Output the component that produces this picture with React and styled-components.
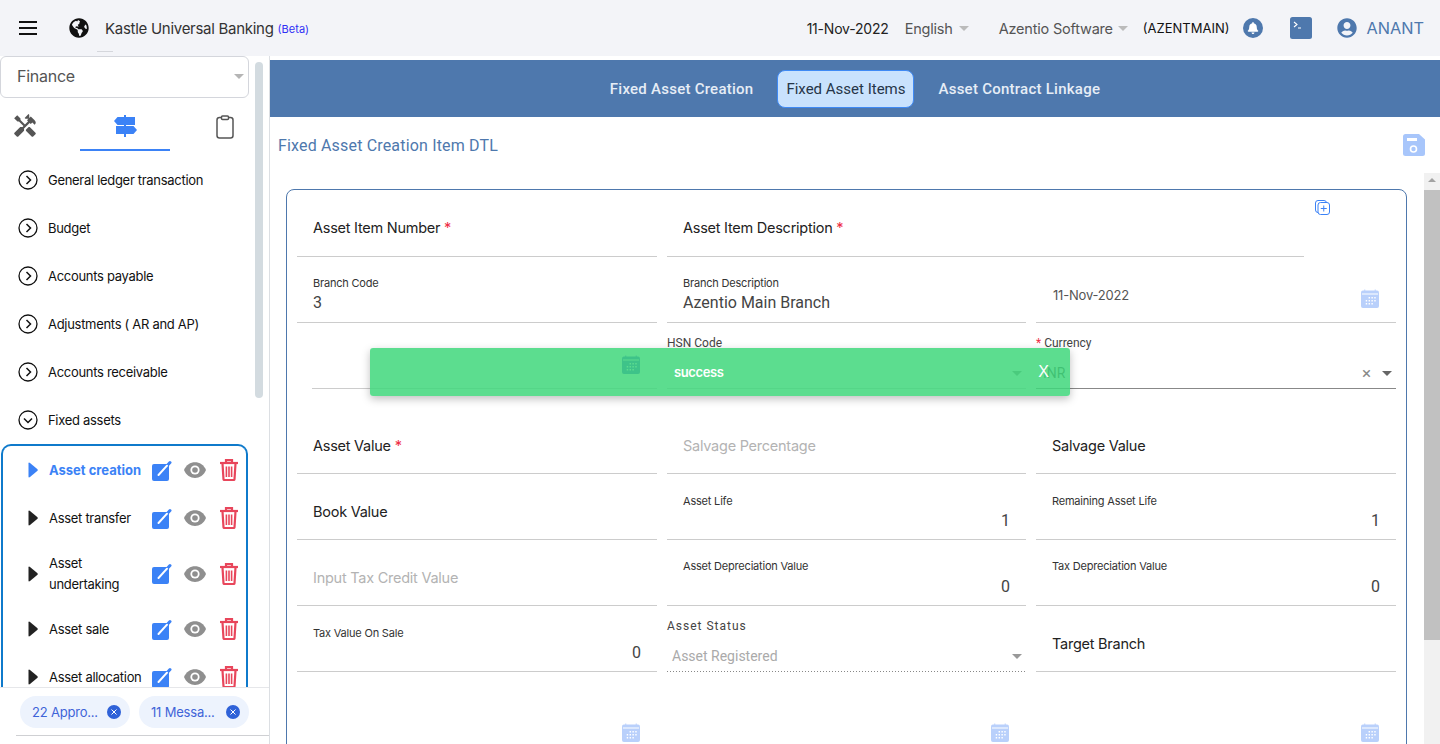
import React from "react";
import styled, { createGlobalStyle } from "styled-components";
import { FaGlobeAmericas, FaBell, FaUserCircle } from "react-icons/fa";
import { MdHandyman } from "react-icons/md";

const GlobalStyle = createGlobalStyle`
  html, body { margin: 0; height: 100%; overflow: hidden; background: #fff; }
  body { font-family: Inter, "Liberation Sans", sans-serif; color: #222; }
  * { box-sizing: border-box; }
`;

const Page = styled.div`
  position: relative;
  width: 1440px;
  height: 744px;
  overflow: hidden;
  display: flex;
  flex-direction: column;
`;

/* header */
const Header = styled.header`
  position: relative;
  height: 56px;
  flex: none;
  display: flex;
  align-items: center;
  background: #f3f4f8;
  padding: 0 16px 0 19px;
`;
const Burger = styled.div`
  width: 18px;
  height: 14px;
  border-top: 2px solid #111;
  border-bottom: 2px solid #111;
  position: relative;
  margin-right: 32px;
  &::after {
    content: "";
    position: absolute;
    left: 0;
    right: 0;
    top: 4px;
    height: 2px;
    background: #111;
  }
`;
const Globe = styled(FaGlobeAmericas)`
  width: 20px;
  height: 20px;
  color: #111;
  margin-right: 16px;
`;
const Brand = styled.span`
  font-size: 15px;
  color: #333;
  letter-spacing: -0.28px;
`;
const Beta = styled.span`
  font-size: 11px;
  color: #3030f5;
  margin-left: 4px;
  position: relative;
  top: 1px;
`;
const Notch = styled.i`
  position: absolute;
  left: 97px;
  top: 51px;
  width: 16px;
  height: 1px;
  background: #d5d7dc;
`;
const HeaderRight = styled.div`
  margin-left: auto;
  display: flex;
  align-items: center;
`;
const HeadText = styled.span`
  font-size: ${(p) => p.$size || 14.5}px;
  color: ${(p) => p.$color || "#555"};
  margin-left: ${(p) => p.$left || 0}px;
  letter-spacing: ${(p) => p.$spacing || "-0.2px"};
  white-space: nowrap;
`;
const Caret = styled.i`
  display: inline-block;
  width: 0;
  height: 0;
  border-left: 5px solid transparent;
  border-right: 5px solid transparent;
  border-top: 5px solid ${(p) => p.$color || "#bbb"};
  margin-left: ${(p) => p.$left || 0}px;
`;
const BellBadge = styled.span`
  width: 20px;
  height: 20px;
  margin-left: 14px;
  border-radius: 50%;
  background: #4e78ad;
  display: flex;
  align-items: center;
  justify-content: center;
  color: #fff;
  font-size: 12px;
`;
const TerminalBox = styled.svg`
  margin-left: 27px;
`;
const UserIcon = styled(FaUserCircle)`
  width: 20px;
  height: 20px;
  color: #4e78ad;
  margin-left: 25px;
`;

/* body */
const Body = styled.div`
  flex: 1;
  min-height: 0;
  display: flex;
`;
const Sidebar = styled.aside`
  width: 270px;
  flex: none;
  border-right: 1px solid #dcdfe3;
  display: flex;
  flex-direction: column;
`;
const SideUpper = styled.div`
  flex: 1;
  min-height: 0;
  display: flex;
  overflow: hidden;
`;
const SideMain = styled.div`
  width: 250px;
  flex: none;
`;
const SideScroll = styled.div`
  width: 8px;
  height: 336px;
  margin: 6px 0 0 5px;
  border-radius: 4px;
  background: #d3dbe0;
`;
const ModuleSelect = styled.div`
  height: 42px;
  width: 249px;
  border: 1px solid #d4d6dc;
  border-radius: 6px;
  display: flex;
  align-items: center;
  justify-content: space-between;
  padding: 0 4px 2px 16px;
  font-size: 16px;
  letter-spacing: -0.25px;
  color: #555;
`;
const SideTabs = styled.div`
  display: flex;
  justify-content: space-between;
  margin-bottom: 5px;
`;
const SideTab = styled.div`
  width: ${(p) => p.$w}px;
  height: 53px;
  padding-top: 17px;
  display: flex;
  justify-content: center;
  border-bottom: 2px solid ${(p) => (p.$active ? "#3b82f6" : "transparent")};
  color: #555;
  font-size: 26px;
`;
const ToolsIcon = styled(MdHandyman)`
  margin-top: -2px;
`;
const MenuRow = styled.div`
  height: 48px;
  display: flex;
  align-items: center;
  padding-left: 18px;
  gap: 10px;
  font-size: 13px;
  letter-spacing: -0.3px;
  color: #111;
`;
const SubBox = styled.div`
  margin-left: 1px;
  width: 247px;
  border: 2px solid #0f7acb;
  border-bottom-width: 0;
  border-radius: 10px 10px 0 0;
  height: 300px;
`;
const SubRow = styled.div`
  height: ${(p) => p.$h || 48}px;
  display: flex;
  align-items: center;
  padding-left: 25px;
  font-size: 13px;
  line-height: 21px;
  letter-spacing: ${(p) => (p.$active ? "0" : "-0.3px")};
  color: ${(p) => (p.$active ? "#3b82f6" : "#111")};
  font-weight: ${(p) => (p.$active ? 700 : 400)};
`;
const SubLabel = styled.div`
  width: 103px;
  margin-left: 11px;
  flex: none;
`;
const SubIcons = styled.div`
  display: flex;
  align-items: center;
`;
const EyeSvg = styled.svg`
  margin: 0 14px 0 12px;
`;
const SideFooter = styled.div`
  height: 57px;
  flex: none;
  position: relative;
  border-top: 1px solid #e6e7ea;
  padding: 8px 0 0 20px;
  display: flex;
  gap: 9px;
  background: #fff;
`;
const FooterRule = styled.i`
  position: absolute;
  left: 16px;
  right: 0;
  top: 47px;
  height: 1px;
  background: #cfd0d3;
`;
const Chip = styled.div`
  width: 110px;
  height: 32px;
  border-radius: 16px;
  background: #edf3fd;
  display: flex;
  align-items: center;
  justify-content: space-between;
  padding: 0 9px 0 12px;
  font-size: 13px;
  letter-spacing: -0.2px;
  color: #3f64d8;
`;
const ChipClose = styled.span`
  width: 14px;
  height: 14px;
  border-radius: 50%;
  background: #2f62d8;
  display: flex;
  align-items: center;
  justify-content: center;
`;

/* main panel */
const Main = styled.main`
  flex: 1;
  min-width: 0;
  padding-top: 4px;
  display: flex;
  flex-direction: column;
`;
const TabBar = styled.nav`
  height: 57px;
  flex: none;
  background: #4e78ad;
  display: flex;
  align-items: center;
  justify-content: center;
`;
const TopTab = styled.div`
  height: 38px;
  display: flex;
  align-items: center;
  padding: 0 ${(p) => (p.$active ? 8 : 0)}px;
  margin: 0 ${(p) => (p.$active ? 24 : 0)}px;
  font-family: Roboto, sans-serif;
  font-size: 15px;
  font-weight: ${(p) => (p.$active ? 400 : 500)};
  letter-spacing: ${(p) => (p.$active ? "0" : "0.25px")};
  border-radius: 8px;
  color: ${(p) => (p.$active ? "#263548" : "#e6edf6")};
  background: ${(p) => (p.$active ? "#c9e2fd" : "transparent")};
  border: ${(p) => (p.$active ? "1px solid #3f8af5" : "0")};
`;
const TitleRow = styled.div`
  height: 56px;
  flex: none;
  display: flex;
  align-items: center;
  justify-content: space-between;
  padding: 0 15px 0 8px;
`;
const PanelTitle = styled.h2`
  margin: 0;
  font-family: Roboto, sans-serif;
  font-size: 16px;
  font-weight: 400;
  letter-spacing: 0.17px;
  color: #4e78ad;
`;
const FormArea = styled.div`
  flex: 1;
  min-height: 0;
  display: flex;
  overflow: hidden;
`;
const FormScroll = styled.div`
  flex: 1;
  min-width: 0;
  padding: 16px 17px 0 16px;
`;
const Card = styled.section`
  position: relative;
  height: 620px;
  border: 1px solid #4e78ad;
  border-radius: 8px 8px 0 0;
  padding: 1px 10px 0;
`;
const CopyButton = styled.svg`
  position: absolute;
  right: 76px;
  top: 10px;
`;
const Grid = styled.div`
  display: grid;
  grid-template-columns: 360px 359px 360px;
  grid-template-rows: repeat(3, 66px) 85px repeat(4, 66px);
  column-gap: 10px;
`;
const Field = styled.div`
  align-self: end;
  height: 66px;
  padding: ${(p) => p.$top || 20}px 16px 0 ${(p) => p.$left ?? 16}px;
  border-bottom: ${(p) => (p.$plain ? "0" : `1px solid ${p.$lineColor || "#ccc"}`)};
  margin-left: ${(p) => p.$inset || 0}px;
  margin-right: ${(p) => p.$cut || 0}px;
  grid-column: ${(p) => p.$span || "auto"};
  display: ${(p) => (p.$row ? "flex" : "block")};
  justify-content: space-between;
  align-items: flex-start;
`;
const DottedField = styled(Field)`
  border-bottom: 0;
  background: linear-gradient(to right, #888 1px, transparent 1px) left bottom / 3px 1px repeat-x;
`;
const BigLabel = styled.div`
  font-size: 14.5px;
  line-height: 20px;
  letter-spacing: -0.25px;
  color: ${(p) => (p.$muted ? "#b3b3b3" : "#222")};
`;
const Star = styled.span`
  color: #ee2d45;
`;
const SmallLabel = styled.div`
  font-size: 11px;
  line-height: 14px;
  letter-spacing: -0.2px;
  color: #333;
`;
const Value = styled.div`
  font-family: Roboto, sans-serif;
  margin-top: ${(p) => p.$gap || 3}px;
  font-size: 16px;
  line-height: 20px;
  color: #444;
  text-align: ${(p) => (p.$right ? "right" : "left")};
`;
const DateText = styled.span`
  font-size: 13px;
  line-height: 18px;
  letter-spacing: -0.2px;
  margin-left: 1px;
  color: #555;
`;
const CalendarSvg = styled.svg`
  margin-top: ${(p) => p.$drop || 0}px;
  margin-right: 1px;
`;
const SelectLabel = styled.div`
  font-family: Roboto, sans-serif;
  font-size: 12px;
  line-height: 14px;
  letter-spacing: ${(p) => p.$spacing || "0"};
  color: #444;
`;
const SelectValue = styled.div`
  margin-top: ${(p) => p.$top || 10}px;
  padding-left: ${(p) => p.$left || 0}px;
  display: flex;
  align-items: center;
  font-family: Roboto, sans-serif;
  font-size: 14px;
  line-height: 20px;
  min-height: 20px;
  color: ${(p) => p.$color || "#aaa"};
`;
const SelectEnd = styled.span`
  margin-left: auto;
  display: flex;
  align-items: center;
  gap: 11px;
  color: #888;
  margin-right: -12px;
`;
const ClearMark = styled.span`
  font-size: 17px;
  line-height: 1;
`;
const Track = styled.div`
  width: 16px;
  flex: none;
  background: #f1f1f1;
  padding-top: 17px;
  position: relative;
  &::before {
    content: "";
    position: absolute;
    left: 4px;
    top: 5px;
    border-left: 4px solid transparent;
    border-right: 4px solid transparent;
    border-bottom: 4px solid #a3a3a3;
  }
`;
const Thumb = styled.div`
  height: 450px;
  background: #c1c1c1;
`;

/* overlay */
const Toast = styled.div`
  position: absolute;
  left: 370px;
  top: 348px;
  width: 700px;
  height: 48px;
  padding: 0 21px 0 304px;
  display: flex;
  align-items: center;
  justify-content: space-between;
  border-radius: 3px;
  background: rgba(63, 215, 123, 0.85);
  box-shadow: 0 3px 8px rgba(0, 0, 0, 0.25);
  color: #fff;
`;
const ToastText = styled.span`
  font-size: 13px;
  font-weight: 600;
  letter-spacing: -0.4px;
`;
const ToastClose = styled.span`
  font-size: 16px;
  font-family: "Liberation Sans", sans-serif;
`;

const CircleChevron = ({ open }) => (
  <svg width="20" height="20" viewBox="0 0 20 20" fill="none" stroke="#111" strokeWidth="1.3">
    <circle cx="10" cy="10" r="9" />
    <path d={open ? "M6 8.5l4 4 4-4" : "M8.5 6l4 4-4 4"} strokeWidth="1.5" />
  </svg>
);
const SignsIcon = () => (
  <svg width="23" height="22" viewBox="0 0 23 22" fill="#3b82f6">
    <rect x="10" y="0" width="2" height="22" />
    <path d="M0 6L3.5 2H21V10H3.5Z" />
    <path d="M2 11H19.5L23 15L19.5 19H2Z" />
  </svg>
);
const SaveIcon = () => (
  <svg width="22" height="22" viewBox="0 0 22 22">
    <path d="M2.5 0H16L22 5.5V19.5Q22 22 19.5 22H2.5Q0 22 0 19.5V2.5Q0 0 2.5 0Z" fill="#a8c6fb" />
    <rect x="4" y="4" width="10" height="3" fill="#fff" />
    <circle cx="10.5" cy="15" r="3" fill="none" stroke="#fff" strokeWidth="1.6" />
  </svg>
);
const Triangle = ({ color }) => (
  <svg width="10" height="16" viewBox="0 0 10 16">
    <path d="M0.5 1.5Q0.5 0 2 1L9.5 7.2Q10 8 9.5 8.8L2 15Q0.5 16 0.5 14.5Z" fill={color} />
  </svg>
);
const EditIcon = () => (
  <svg width="20" height="21" viewBox="0 0 20 21" fill="none">
    <rect x="0" y="4" width="17" height="17" rx="2" fill="#3b82f6" />
    <path d="M6.5 15L18 2.5" stroke="#3b82f6" strokeWidth="3" strokeLinecap="round" />
    <path d="M6.5 15L15 5.7" stroke="#fff" strokeWidth="2" strokeLinecap="round" />
  </svg>
);
const EyeIcon = () => (
  <EyeSvg width="22" height="16" viewBox="0 0 22 16">
    <path d="M0 8C4 -2.5 18 -2.5 22 8C18 18.5 4 18.5 0 8Z" fill="#8f8f8f" />
    <circle cx="11" cy="8" r="4.6" fill="#fff" />
    <circle cx="11" cy="8" r="2.8" fill="#8f8f8f" />
  </EyeSvg>
);
const TrashIcon = () => (
  <svg width="18" height="22" viewBox="0 0 18 22" fill="none" stroke="#e8465b" strokeWidth="2.2">
    <path d="M0 4H18" />
    <path d="M6 4V1.2H12V4" />
    <path d="M2.5 4.5L3.5 20.3Q3.6 21 4.5 21H13.5Q14.4 21 14.5 20.3L15.5 4.5" />
    <path d="M6.4 7.5V18M9 7.5V18M11.6 7.5V18" strokeWidth="1.6" />
  </svg>
);
const Calendar = ({ color = "#b9d0fb", drop }) => (
  <CalendarSvg $drop={drop} width="18" height="19" viewBox="0 0 19 19" preserveAspectRatio="none">
    <path d="M4 0.5V3M15 0.5V3" stroke={color} strokeWidth="1" />
    <rect x="0" y="1.5" width="19" height="17.5" rx="2" fill={color} />
    <rect x="1" y="4.5" width="17" height="1" fill="#fff" />
    <path d="M8 8h1.5v1.5H8zM11 8h1.5v1.5H11zM14 8h1.5v1.5H14zM5 11h1.5v1.5H5zM8 11h1.5v1.5H8zM11 11h1.5v1.5H11zM14 11h1.5v1.5H14zM5 14h1.5v1.5H5zM8 14h1.5v1.5H8zM11 14h1.5v1.5H11z" fill="#fff" />
  </CalendarSvg>
);
const ChipX = () => (
  <svg width="6" height="6" viewBox="0 0 6 6" stroke="#fff">
    <path d="M0.5 0.5l5 5M5.5 0.5l-5 5" />
  </svg>
);

const menu = ["General ledger transaction", "Budget", "Accounts payable", "Adjustments ( AR and AP)", "Accounts receivable"];
const subItems = [
  { label: "Asset creation", active: true },
  { label: "Asset transfer" },
  { label: "Asset undertaking", h: 63 },
  { label: "Asset sale" },
  { label: "Asset allocation" },
];

const Stat = ({ label, value, top, gap }) => (
  <Field $top={top}>
    <SmallLabel>{label}</SmallLabel>
    <Value $right $gap={gap}>{value}</Value>
  </Field>
);

export default function App() {
  return (
    <Page>
      <GlobalStyle />
      <Header>
        <Burger />
        <Globe />
        <Brand>Kastle Universal Banking</Brand>
        <Beta>(Beta)</Beta>
        <Notch />
        <HeaderRight>
          <HeadText $size={14} $color="#222">11-Nov-2022</HeadText>
          <HeadText $left={16}>English</HeadText>
          <Caret $left={6} />
          <HeadText $left={30}>Azentio Software</HeadText>
          <Caret $left={5} />
          <HeadText $left={15} $size={13} $color="#111" $spacing="0">(AZENTMAIN)</HeadText>
          <BellBadge><FaBell /></BellBadge>
          <TerminalBox width="22" height="22" viewBox="0 0 22 22">
            <rect width="22" height="22" rx="2.5" fill="#4e78ad" />
            <path d="M4 5l3 2.5-3 2.5M8 11h3" stroke="#fff" strokeWidth="1.1" fill="none" />
          </TerminalBox>
          <UserIcon />
          <HeadText $left={9} $size={16.3} $color="#4e78ad" $spacing="0">ANANT</HeadText>
        </HeaderRight>
      </Header>
      <Body>
        <Sidebar>
          <SideUpper>
            <SideMain>
              <ModuleSelect>Finance<Caret $color="#b5b5b5" /></ModuleSelect>
              <SideTabs>
                <SideTab $w={50}><ToolsIcon /></SideTab>
                <SideTab $w={90} $active><SignsIcon /></SideTab>
                <SideTab $w={50}>
                  <svg width="18" height="24" viewBox="0 0 18 24" fill="none" stroke="#555" strokeWidth="1.5">
                    <rect x="1" y="2.5" width="16" height="20.5" rx="2.5" />
                    <rect x="5.5" y="1" width="7" height="3.5" rx="1" fill="#fff" />
                  </svg>
                </SideTab>
              </SideTabs>
              {menu.map((m) => (
                <MenuRow key={m}><CircleChevron />{m}</MenuRow>
              ))}
              <MenuRow><CircleChevron open />Fixed assets</MenuRow>
              <SubBox>
                {subItems.map((s) => (
                  <SubRow key={s.label} $h={s.h} $active={s.active}>
                    <Triangle color={s.active ? "#3b82f6" : "#222"} />
                    <SubLabel>{s.label}</SubLabel>
                    <SubIcons><EditIcon /><EyeIcon /><TrashIcon /></SubIcons>
                  </SubRow>
                ))}
              </SubBox>
            </SideMain>
            <SideScroll />
          </SideUpper>
          <SideFooter>
            <Chip>22 Appro...<ChipClose><ChipX /></ChipClose></Chip>
            <Chip>11 Messa...<ChipClose><ChipX /></ChipClose></Chip>
            <FooterRule />
          </SideFooter>
        </Sidebar>
        <Main>
          <TabBar>
            <TopTab>Fixed Asset Creation</TopTab>
            <TopTab $active>Fixed Asset Items</TopTab>
            <TopTab>Asset Contract Linkage</TopTab>
          </TabBar>
          <TitleRow>
            <PanelTitle>Fixed Asset Creation Item DTL</PanelTitle>
            <SaveIcon />
          </TitleRow>
          <FormArea>
            <FormScroll>
              <Card>
                <CopyButton width="15" height="15" viewBox="0 0 15 15" fill="#fff" stroke="#3b82f6" strokeWidth="1">
                  <rect x="0.5" y="0.5" width="11" height="12" rx="2.5" />
                  <rect x="3" y="2.5" width="11.5" height="12" rx="2.5" />
                  <path d="M8.75 5.5v6M5.75 8.5h6" />
                </CopyButton>
                <Grid>
                  <Field $top={27}><BigLabel>Asset Item Number <Star>*</Star></BigLabel></Field>
                  <Field $top={27} $span="span 2" $cut={92}><BigLabel>Asset Item Description <Star>*</Star></BigLabel></Field>

                  <Field $top={19}><SmallLabel>Branch Code</SmallLabel><Value>3</Value></Field>
                  <Field $top={19}><SmallLabel>Branch Description</SmallLabel><Value>Azentio Main Branch</Value></Field>
                  <Field $row $top={29}><DateText>11-Nov-2022</DateText><Calendar drop={3} /></Field>

                  <Field $row $inset={15} $top={32}><span /><Calendar color="#3b4fd8" /></Field>
                  <Field $left={0} $top={13}>
                    <SelectLabel>HSN Code</SelectLabel>
                    <SelectValue $top={13}><SelectEnd><Caret $color="#888" /></SelectEnd></SelectValue>
                  </Field>
                  <Field $left={0} $top={13} $lineColor="#888">
                    <SelectLabel><Star>*</Star> Currency</SelectLabel>
                    <SelectValue $top={13} $left={7} $color="#444">INR<SelectEnd><ClearMark>×</ClearMark><Caret $color="#666" /></SelectEnd></SelectValue>
                  </Field>

                  <Field $top={28}><BigLabel>Asset Value <Star>*</Star></BigLabel></Field>
                  <Field $top={28}><BigLabel $muted>Salvage Percentage</BigLabel></Field>
                  <Field $top={28}><BigLabel>Salvage Value</BigLabel></Field>

                  <Field $top={28}><BigLabel>Book Value</BigLabel></Field>
                  <Stat label="Asset Life" value="1" />
                  <Stat label="Remaining Asset Life" value="1" />

                  <Field $top={28}><BigLabel $muted>Input Tax Credit Value</BigLabel></Field>
                  <Stat label="Asset Depreciation Value" value="0" top={19} gap={4} />
                  <Stat label="Tax Depreciation Value" value="0" top={19} gap={4} />

                  <Stat label="Tax Value On Sale" value="0" />
                  <DottedField $left={0} $top={13}>
                    <SelectLabel $spacing="1px">Asset Status</SelectLabel>
                    <SelectValue $top={13} $left={5}>Asset Registered<SelectEnd><Caret $color="#999" /></SelectEnd></SelectValue>
                  </DottedField>
                  <Field $top={28}><BigLabel>Target Branch</BigLabel></Field>

                  <Field $row $plain $top={51}><span /><Calendar /></Field>
                  <Field $row $plain $top={51}><span /><Calendar /></Field>
                  <Field $row $plain $top={51}><span /><Calendar /></Field>
                </Grid>
              </Card>
            </FormScroll>
            <Track><Thumb /></Track>
          </FormArea>
        </Main>
      </Body>
      <Toast>
        <ToastText>success</ToastText>
        <ToastClose>X</ToastClose>
      </Toast>
    </Page>
  );
}
